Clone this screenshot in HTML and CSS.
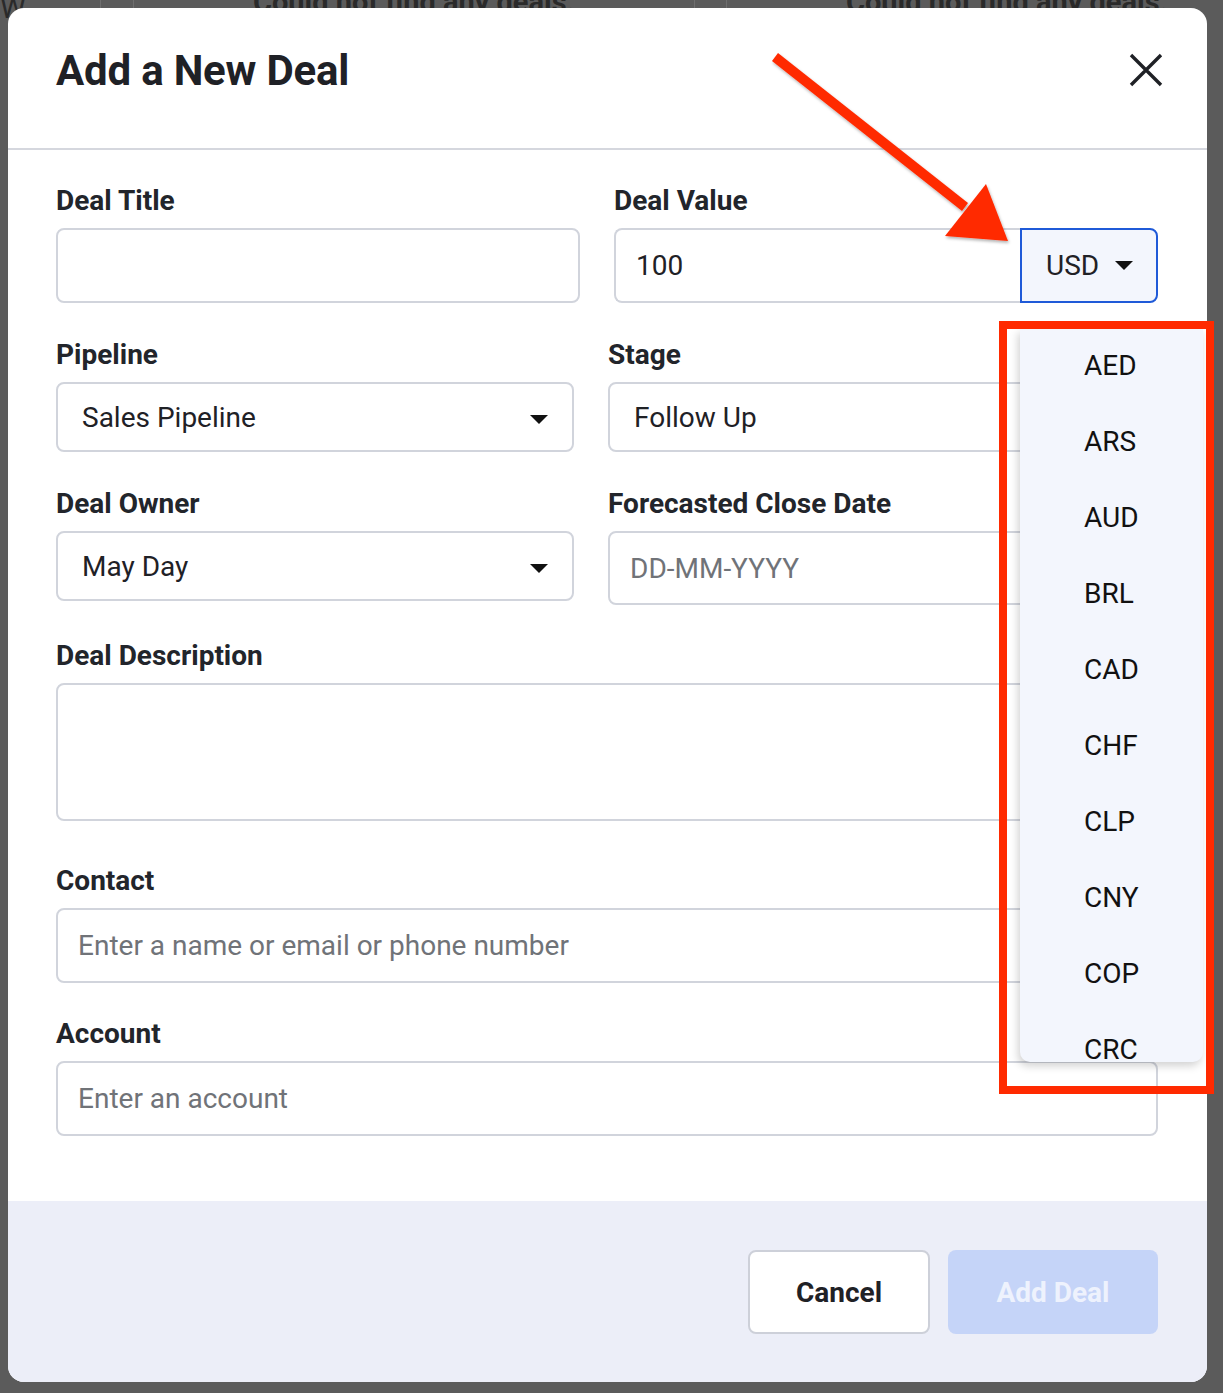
FILE: index.html
```html
<!DOCTYPE html>
<html lang="en">
<head>
<meta charset="utf-8">
<title>Add a New Deal</title>
<link rel="stylesheet" href="styles.css">
</head>
<body>
<div class="backdrop">
  <div class="bg-cell bg-narrow">W</div>
  <div class="bg-cell bg-gap"></div>
  <div class="bg-cell bg-wide">Could not find any deals.</div>
  <div class="bg-cell bg-gap2"></div>
  <div class="bg-cell bg-wide2">Could not find any deals.</div>
</div>

<div class="modal">
  <header class="modal-header">
    <h1 class="modal-title">Add a New Deal</h1>
    <button class="close-btn" aria-label="Close">
      <svg viewBox="0 0 34 34" width="34" height="34"><path d="M2 2 L32 32 M32 2 L2 32" stroke="#1f2126" stroke-width="3.4" fill="none"/></svg>
    </button>
  </header>

  <div class="modal-body">
    <div class="row row-top">
      <div class="field">
        <label class="label">Deal Title</label>
        <div class="input"></div>
      </div>
      <div class="field">
        <label class="label">Deal Value</label>
        <div class="input-group">
          <div class="input input-left">100</div>
          <div class="currency-btn">USD<span class="caret"></span></div>
        </div>
      </div>
    </div>

    <div class="row row-mid">
      <div class="field">
        <label class="label">Pipeline</label>
        <div class="select">Sales Pipeline<span class="caret"></span></div>
      </div>
      <div class="field">
        <label class="label">Stage</label>
        <div class="select">Follow Up<span class="caret"></span></div>
      </div>
    </div>

    <div class="row row-mid">
      <div class="field">
        <label class="label">Deal Owner</label>
        <div class="select">May Day<span class="caret"></span></div>
      </div>
      <div class="field">
        <label class="label">Forecasted Close Date</label>
        <div class="input placeholder">DD-MM-YYYY</div>
      </div>
    </div>

    <div class="field field-desc">
      <label class="label">Deal Description</label>
      <div class="textarea"></div>
    </div>

    <div class="field">
      <label class="label">Contact</label>
      <div class="input placeholder">Enter a name or email or phone number</div>
    </div>

    <div class="field">
      <label class="label">Account</label>
      <div class="input placeholder">Enter an account</div>
    </div>
  </div>

  <footer class="modal-footer">
    <button class="btn btn-cancel">Cancel</button>
    <button class="btn btn-primary">Add Deal</button>
  </footer>
</div>

<ul class="currency-menu">
  <li>AED</li>
  <li>ARS</li>
  <li>AUD</li>
  <li>BRL</li>
  <li>CAD</li>
  <li>CHF</li>
  <li>CLP</li>
  <li>CNY</li>
  <li>COP</li>
  <li>CRC</li>
</ul>

<div class="highlight-box"></div>

<svg class="annotation-arrow" width="1223" height="300" viewBox="0 0 1223 300">
  <defs>
    <filter id="sh" x="-10%" y="-10%" width="130%" height="130%">
      <feDropShadow dx="1" dy="2" stdDeviation="1.5" flood-color="#000" flood-opacity="0.3"/>
    </filter>
  </defs>
  <g filter="url(#sh)" fill="#ff2a00">
    <path d="M772 61 L778 53 L968 203 L962 211 Z"/>
    <path d="M1008 241 L945 236 L986 184 Z"/>
  </g>
</svg>
</body>
</html>
```

FILE: styles.css
```css
* { box-sizing: border-box; }

html, body {
  margin: 0;
  padding: 0;
}

body {
  position: relative;
  width: 1223px;
  height: 1393px;
  overflow: hidden;
  background: #5b5b5b;
  font-family: Roboto, "Liberation Sans", sans-serif;
  color: #1f2126;
}

/* background page peeking above the modal */
.backdrop {
  position: absolute;
  left: 0;
  top: 0;
  width: 1223px;
  height: 30px;
  display: flex;
  overflow: hidden;
}
.bg-cell {
  flex: none;
  height: 30px;
  border-right: 1px solid #6e6e6e;
  color: #2a2a2a;
  font-weight: 700;
  font-size: 29px;
  line-height: 16px;
  margin-top: -6px;
  text-align: center;
  white-space: nowrap;
  overflow: hidden;
}
.bg-narrow { width: 101px; text-align: left; font-weight: 400; line-height: 40px; margin-top: -12px; }
.bg-gap { width: 33px; }
.bg-wide { width: 561px; }
.bg-gap2 { width: 32px; }
.bg-wide2 {
  flex: 1;
  min-width: 0;
  border-right: 0;
  text-align: left;
  padding-left: 119px;
}

/* modal */
.modal {
  position: absolute;
  left: 8px;
  top: 8px;
  width: 1199px;
  height: 1374px;
  background: #fff;
  border-radius: 16px;
  overflow: hidden;
  display: flex;
  flex-direction: column;
}

.modal-header {
  height: 142px;
  flex: none;
  border-bottom: 2px solid #d5d7de;
  display: flex;
  align-items: center;
  justify-content: space-between;
  padding: 0 44px 0 48px;
}
.modal-title {
  margin: 0 0 16px 0;
  font-size: 42px;
  font-weight: 700;
  letter-spacing: -0.2px;
  color: #1f2126;
}
.close-btn {
  border: 0;
  background: none;
  padding: 0;
  width: 34px;
  height: 34px;
  margin-bottom: 16px;
}
.close-btn svg { display: block; }

.modal-body {
  flex: 1;
  padding: 36px 49px 0 48px;
  display: flex;
  flex-direction: column;
  gap: 36px;
}

.row {
  display: grid;
  column-gap: 34px;
  align-items: start;
}
.row-top { grid-template-columns: 524px 544px; }
.row-mid { grid-template-columns: 518px 550px; margin-top: 1px; }

.field {
  display: flex;
  flex-direction: column;
}
.field-desc { margin-bottom: 9px; }

.label {
  display: block;
  height: 30px;
  line-height: 30px;
  margin-bottom: 12px;
  font-size: 28px;
  font-weight: 700;
  color: #22252b;
}

.input, .select, .textarea {
  border: 2px solid #d1d4dc;
  border-radius: 8px;
  background: #fff;
  font-size: 28px;
  color: #1f2126;
  display: flex;
  align-items: center;
  padding: 0 20px;
}
.input { height: 75px; }
.select { height: 70px; padding: 0 24px; position: relative; }
.textarea { height: 138px; }
.placeholder { color: #707378; }

.row-mid .input { height: 74px; }

.select .caret {
  position: absolute;
  right: 24px;
  top: 31px;
}
.caret {
  width: 0;
  height: 0;
  border-left: 9.5px solid transparent;
  border-right: 9.5px solid transparent;
  border-top: 9px solid #111;
}

.input-group {
  display: flex;
  height: 75px;
}
.input-left {
  flex: 1;
  border-radius: 8px 0 0 8px;
  border-right: 0;
}
.currency-btn {
  width: 138px;
  height: 75px;
  border: 2px solid #1f5ad8;
  border-radius: 0 8px 8px 0;
  background: #f3f6fd;
  display: flex;
  align-items: center;
  padding-left: 24px;
  gap: 16px;
  font-size: 28px;
}

.modal-footer {
  flex: none;
  height: 181px;
  background: #eceef8;
  display: flex;
  justify-content: flex-end;
  align-items: flex-start;
  gap: 18px;
  padding: 49px 49px 0 0;
}
.btn {
  height: 84px;
  border-radius: 8px;
  font-family: Roboto, "Liberation Sans", sans-serif;
  font-size: 28px;
  font-weight: 700;
}
.btn-cancel {
  width: 182px;
  background: #fff;
  border: 2px solid #cdd0d9;
  color: #1f2126;
}
.btn-primary {
  width: 210px;
  background: #c5d4f8;
  border: 0;
  color: #eef2fd;
}

/* open currency dropdown */
.currency-menu {
  position: absolute;
  left: 1020px;
  top: 329px;
  width: 183px;
  height: 733px;
  margin: 0;
  padding: 0;
  list-style: none;
  background: #f3f6fd;
  border-radius: 0 0 10px 10px;
  box-shadow: -2px 4px 8px rgba(0, 0, 0, 0.18);
  overflow: hidden;
}
.currency-menu li {
  height: 76px;
  line-height: 74px;
  padding-left: 64px;
  font-size: 28px;
  color: #111;
}

.highlight-box {
  position: absolute;
  left: 999px;
  top: 321px;
  width: 215px;
  height: 773px;
  border: 8px solid #ff2a00;
}

.annotation-arrow {
  position: absolute;
  left: 0;
  top: 0;
  pointer-events: none;
}
```
